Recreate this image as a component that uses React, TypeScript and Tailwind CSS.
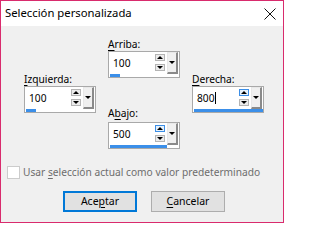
import React from 'react';

const SpinBox: React.FC<{
  value: string;
  bar: number;
  hot?: boolean;
  caret?: boolean;
}> = ({ value, bar, hot, caret }) => {
  return (
    <div className="flex h-[27px] w-[72px] flex-col border border-[#a9a9a9] bg-white">
      <div className="flex h-[22px] items-start">
        <div className="flex h-[22px] flex-1 items-center pl-[4px] text-[10.2px] leading-none text-black">
          <span>{value}</span>
          {caret && <span className="ml-[1px] h-[12px] w-px bg-black" />}
        </div>
        <div className="mt-[2px] flex w-[10px] flex-col gap-[3px]">
          <div
            className={`flex h-[7px] items-center justify-center border ${
              hot ? 'border-[#3c8ee6] bg-[#e5f1fb]' : 'border-[#b4b4b4] bg-[#ececec]'
            }`}
          >
            <span className="h-0 w-0 border-x-[3px] border-b-[3px] border-x-transparent border-b-black" />
          </div>
          <div className="flex h-[7px] items-center justify-center border border-[#b4b4b4] bg-[#ececec]">
            <span className="h-0 w-0 border-x-[3px] border-t-[3px] border-x-transparent border-t-black" />
          </div>
        </div>
        <div className="ml-[2px] mr-[1px] flex h-[22px] w-[11px] items-center justify-center border-r-2 border-b-2 border-l border-t border-r-[#8a8a8a] border-b-[#8a8a8a] border-l-[#e8e8e8] border-t-[#e8e8e8] bg-[#f0f0f0]">
          <span className="h-0 w-0 border-x-[3px] border-t-[3px] border-x-transparent border-t-black" />
        </div>
      </div>
      <div className="flex h-[3px] items-start pl-[1px]">
        <div className="h-[3px] bg-[#3b8fe9]" style={{ width: bar }} />
      </div>
    </div>
  );
};

const Label: React.FC<{ pre: string; key1: string; post: string }> = ({ pre, key1, post }) => (
  <div className="h-[13px] whitespace-nowrap text-[10.2px] leading-[13px] text-black">
    {pre}
    <span className="underline underline-offset-[2px]">{key1}</span>
    {post}
  </div>
);

export default function App() {
  return (
    <div
      className="h-[224px] w-[287px] bg-white"
      style={{ fontFamily: '"Noto Sans", "Open Sans", sans-serif' }}
    >
      <div className="flex h-[223px] w-[284px] flex-col border border-[#d92b6d] bg-[#f0f0f0]">
        <div className="flex h-[25px] items-center justify-between bg-white pl-[4px] pr-[6px]">
          <span className="text-[11.3px] text-black">Selección personalizada</span>
          <svg width="12" height="12" viewBox="0 0 12 12" className="mr-[1px]">
            <path d="M0.5 0.5 L11.5 11.5 M11.5 0.5 L0.5 11.5" stroke="#111" strokeWidth="1" />
          </svg>
        </div>

        <div className="flex gap-[12px] pl-[23px]">
          <div className="flex flex-col pt-[47px]">
            <Label pre="" key1="I" post="zquierda:" />
            <SpinBox value="100" bar={10} />
          </div>
          <div className="flex flex-col pt-[12px]">
            <Label pre="" key1="A" post="rriba:" />
            <SpinBox value="100" bar={10} />
            <div className="mt-[29px]">
              <Label pre="A" key1="b" post="ajo:" />
            </div>
            <div className="mt-[2px]">
              <SpinBox value="500" bar={57} hot />
            </div>
          </div>
          <div className="flex flex-col pt-[47px]">
            <Label pre="" key1="D" post="erecha:" />
            <SpinBox value="800" bar={69} hot caret />
          </div>
        </div>

        <div className="mt-[17px] flex h-[13px] items-center whitespace-nowrap pl-[6px] text-[10.2px] text-[#6d6d6d]">
          <span className="h-[13px] w-[13px] shrink-0 border border-[#cccccc] bg-white" />
          <span className="ml-[3px]">
            Usar <span className="underline underline-offset-[2px]">s</span>elección actual como valor predeterminado
          </span>
        </div>

        <div className="mt-[12px] flex gap-[14px] pl-[62px]">
          <button className="flex h-[21px] w-[74px] items-center justify-center border-2 border-[#0078d7] bg-[#e1e1e1] text-[10.5px] text-black">
            Ace<span className="underline underline-offset-[2px]">p</span>tar
          </button>
          <button className="flex h-[21px] w-[74px] items-center justify-center border border-[#adadad] bg-[#e1e1e1] text-[10.5px] text-black">
            <span className="underline underline-offset-[2px]">C</span>ancelar
          </button>
        </div>
      </div>
    </div>
  );
}
